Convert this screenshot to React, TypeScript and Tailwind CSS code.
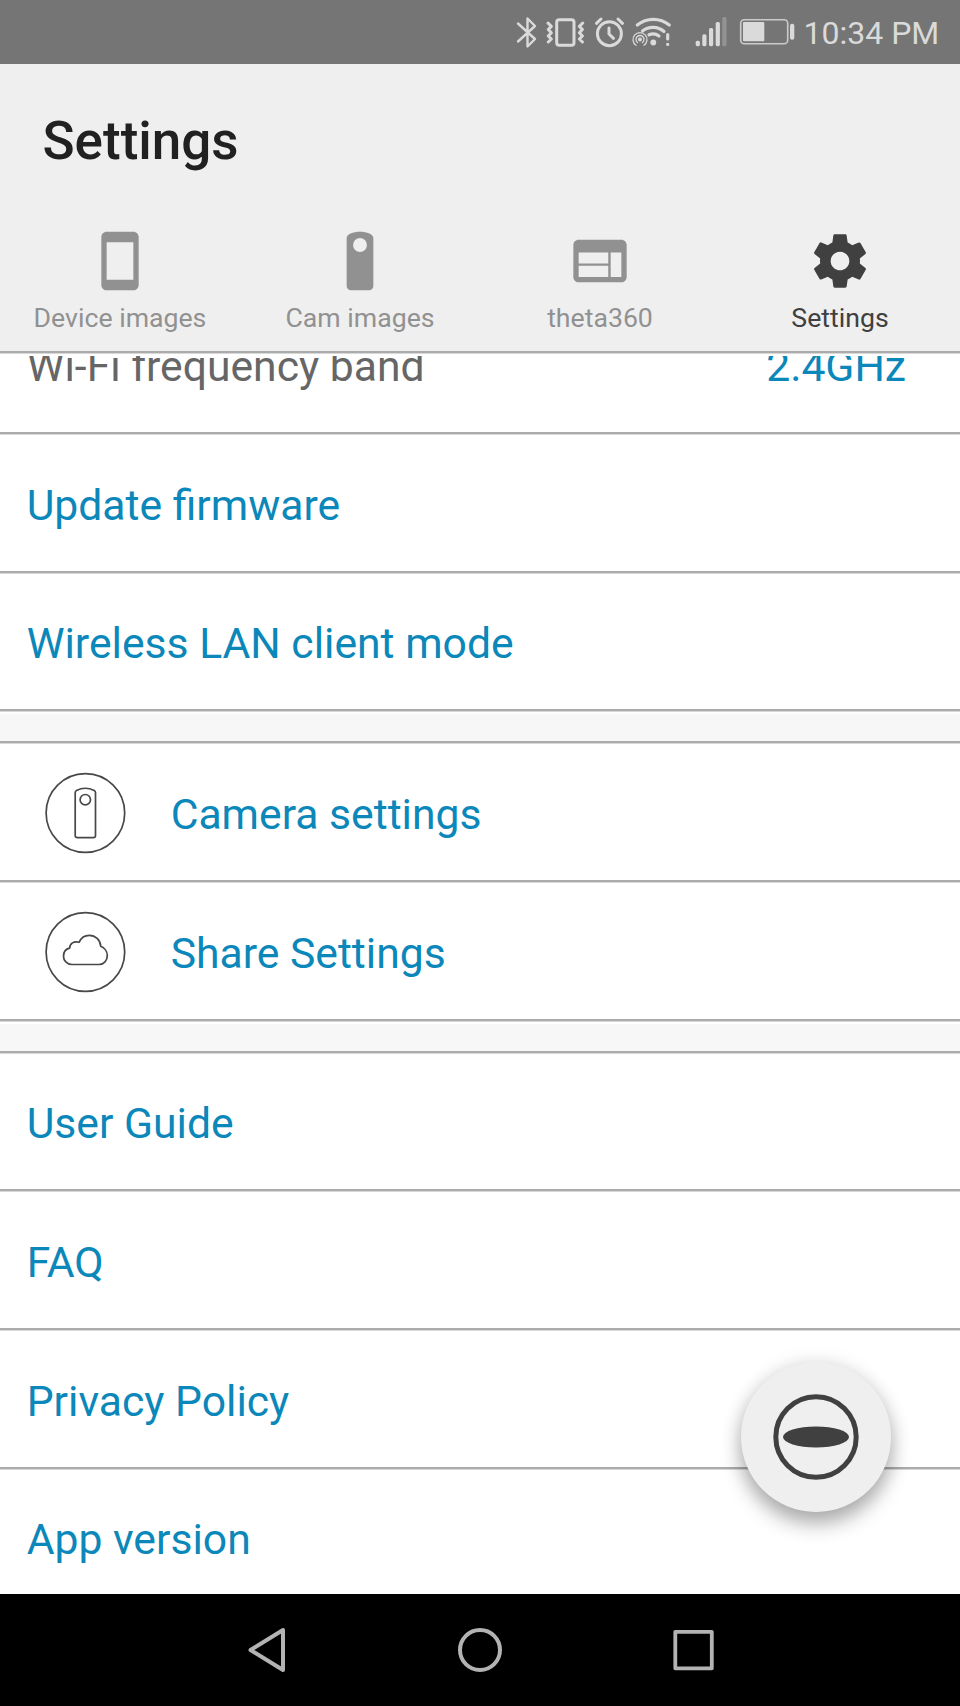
import type { ReactNode } from "react";

const GEAR =
  "M19.43 12.98c.04-.32.07-.64.07-.98s-.03-.66-.07-.98l2.11-1.65c.19-.15.24-.42.12-.64l-2-3.46c-.12-.22-.39-.3-.61-.22l-2.49 1c-.52-.4-1.08-.73-1.69-.98l-.38-2.65C14.46 2.18 14.25 2 14 2h-4c-.25 0-.46.18-.49.42l-.38 2.65c-.61.25-1.17.59-1.69.98l-2.49-1c-.23-.09-.49 0-.61.22l-2 3.46c-.13.22-.07.49.12.64l2.11 1.65c-.04.32-.07.65-.07.98s.03.66.07.98l-2.11 1.65c-.19.15-.24.42-.12.64l2 3.46c.12.22.39.3.61.22l2.49-1c.52.4 1.08.73 1.69.98l.38 2.65c.03.24.24.42.49.42h4c.25 0 .46-.18.49-.42l.38-2.65c.61-.25 1.17-.59 1.69-.98l2.49 1c.23.09.49 0 .61-.22l2-3.46c.12-.22.07-.49-.12-.64l-2.11-1.65zM12 15.5c-1.93 0-3.5-1.57-3.5-3.5s1.57-3.5 3.5-3.5 3.5 1.57 3.5 3.5-1.57 3.5-3.5 3.5z";
const PHONE =
  "M17 1.01L7 1c-1.1 0-2 .9-2 2v18c0 1.1.9 2 2 2h10c1.1 0 2-.9 2-2V3c0-1.1-.9-1.99-2-1.99zM17 19H7V5h10v14z";
const CAMERA =
  "M7 3.4C7 1.9 9.4 1 12 1s5 .9 5 2.4V21.4c0 .9-.7 1.6-1.6 1.6H8.6c-.9 0-1.6-.7-1.6-1.6zM12 3.4a2.6 2.6 0 1 0 0 5.2a2.6 2.6 0 1 0 0-5.2z";
const WEB =
  "M20 4H4c-1.1 0-1.99.9-1.99 2L2 18c0 1.1.9 2 2 2h16c1.1 0 2-.9 2-2V6c0-1.1-.9-2-2-2zm-4.9 14H4v-4.2h11.1V18zm0-5.1H4V8.8h11.1v4.1zM20 18h-4V8.8h4V18z";

function StatusBar() {
  return (
    <div className="flex h-16 shrink-0 items-center bg-[#757575] pl-[516px] text-[#dadada]">
      <svg width="21" height="36" fill="none" stroke="currentColor" strokeWidth="2.4" strokeLinejoin="round" strokeLinecap="round">
        <path d="M2 9.5L19 25L11.5 32.5V4.5L19 12L2 27.5" />
      </svg>
      <svg className="ml-[9px]" width="39" height="36" fill="none" stroke="currentColor" strokeWidth="3" strokeLinejoin="round" strokeLinecap="round">
        <rect x="10.7" y="5.7" width="17.3" height="25.6" rx="2.5" />
        <path d="M2 9L5.3 12.4L2.3 15.5L5.3 18.7L2.3 22L5.3 25L2.3 28M36.7 9L33.4 12.4L36.4 15.5L33.4 18.7L36.4 22L33.4 25L36.4 28" />
      </svg>
      <svg className="ml-[9px]" width="31" height="36" fill="none" stroke="currentColor" strokeWidth="3" strokeLinejoin="round" strokeLinecap="round">
        <circle cx="15.4" cy="19.7" r="12" />
        <path d="M2.5 9.3L7 5M24 5L28.5 9.3M15 14V20L19.5 24.3" />
      </svg>
      <svg className="ml-1.5" width="41" height="36" fill="none" stroke="currentColor" strokeWidth="3.2" strokeLinecap="round">
        <path d="M6.3 11A25.5 25.5 0 0 1 38.3 11M11.5 17A17 17 0 0 1 33 17.5M18 20.8A10 10 0 0 1 28 22" />
        <circle cx="22.3" cy="28.5" r="2.9" fill="currentColor" stroke="none" />
        <path d="M36.7 20.5V25M36.7 30.3V30.4" />
        <circle cx="9" cy="25.5" r="2" fill="currentColor" stroke="none" />
        <path strokeWidth="1.3" d="M6.5 28.6A4 4 0 1 1 11.5 28.6M5 31.3A7 7 0 1 1 13 31.3" />
      </svg>
      <svg className="ml-[23px]" width="33" height="36" fill="currentColor">
        <rect x=".7" y="26.7" width="4.2" height="5.5" rx="1.6" />
        <rect x="7.3" y="20.3" width="4.2" height="11.9" rx="1.6" />
        <rect x="14" y="14" width="4.2" height="18.2" rx="1.6" />
        <rect x="20.7" y="8" width="4.2" height="24.2" rx="1.6" />
        <rect x="27.3" y="3" width="4.2" height="29.2" rx="1.6" opacity=".3" />
      </svg>
      <svg className="ml-[11px]" width="56" height="36" fill="currentColor">
        <rect x="1.7" y="5.7" width="47" height="24" rx="3.5" fill="none" stroke="currentColor" strokeWidth="1.6" opacity=".85" />
        <rect x="4" y="8" width="21.3" height="19.2" rx="1" />
        <rect x="51" y="9.7" width="4.3" height="16" rx="2" />
      </svg>
      <span className="ml-[8.5px] pt-0.5 text-[32px] leading-none whitespace-nowrap">10:34 PM</span>
    </div>
  );
}

function Tab({ d, label, active = false }: { d: string; label: string; active?: boolean }) {
  return (
    <div className={active ? "flex flex-col items-center text-[#404040]" : "flex flex-col items-center text-[#919191]"}>
      <svg width="64" height="64" viewBox="0 0 24 24" fill="currentColor" fillRule="evenodd">
        <path d={d} />
      </svg>
      <span className="mt-[8.67px] text-[26.67px] leading-[32px] whitespace-nowrap">{label}</span>
    </div>
  );
}

function Divider() {
  return <div className="h-[3px] shrink-0 border-t-2 border-[#ababab] bg-[#d8d8d8]" />;
}

function SectionGap() {
  return <div className="h-[29px] shrink-0 border-t-2 border-white bg-[#f7f7f7]" />;
}

function Row({ label, icon, value }: { label: string; icon?: ReactNode; value?: string }) {
  return (
    <>
      <div
        className={
          icon
            ? "flex h-[135.67px] shrink-0 items-center pl-11 text-[42.67px] leading-[50px] text-[#0b87b9]"
            : "flex h-[135.67px] shrink-0 items-center pr-[54px] pl-[26.67px] text-[42.67px] leading-[50px] text-[#0b87b9]"
        }
      >
        {icon && <span className="mt-0.5 mr-[44.67px] shrink-0">{icon}</span>}
        <span className={value ? "flex-1 pt-1 text-[#666666]" : "flex-1 pt-1"}>{label}</span>
        {value && <span className="pt-1">{value}</span>}
      </div>
      <Divider />
    </>
  );
}

const cameraIcon = (
  <svg width="82" height="82" fill="none" stroke="#484848" strokeWidth="1.7">
    <circle cx="41.4" cy="41" r="39.3" />
    <path d="M31.2 20.5Q31.2 19.2 32.5 18.5Q41.3 14 50.2 18.5Q51.5 19.2 51.5 20.5V63.5Q51.5 65.7 49.3 65.7H33.4Q31.2 65.7 31.2 63.5Z" />
    <circle cx="41.3" cy="27.7" r="5.2" />
  </svg>
);

const cloudIcon = (
  <svg width="82" height="82" fill="none" stroke="#484848" strokeWidth="1.7" strokeLinejoin="round">
    <circle cx="41.4" cy="41" r="39.3" />
    <path d="M28 53.5C22.8 53.5 19.5 49.5 19.5 45.2C19.5 41 22 38 25.6 37.2C25.8 32.5 29.8 29.7 35.2 31.2C37 27 40.9 24.3 45.3 24.3C51.5 24.3 56.3 29 56.7 35.2C60.5 36.7 63.3 40.5 63.3 44.5C63.3 49.5 60 53.5 55 53.5Z" />
  </svg>
);

export default function App() {
  return (
    <div className="relative flex h-[1706px] w-[960px] flex-col overflow-hidden bg-white font-[Roboto,sans-serif]">
      <StatusBar />
      <header className="h-[287px] shrink-0 bg-[#efefef]">
        <h1 className="h-[165.33px] pt-[46px] pl-[42.5px] text-[53px] leading-[62px] font-medium text-[#212121]">Settings</h1>
        <nav className="grid grid-cols-4">
          <Tab d={PHONE} label="Device images" />
          <Tab d={CAMERA} label="Cam images" />
          <Tab d={WEB} label="theta360" />
          <Tab d={GEAR} label="Settings" active />
        </nav>
      </header>
      <Divider />
      <main className="mt-0.5 flex min-h-0 flex-1 flex-col overflow-hidden">
        <div className="-mt-[59.67px] flex flex-col">
          <Row label="Wi-Fi frequency band" value="2.4GHz" />
          <Row label="Update firmware" />
          <Row label="Wireless LAN client mode" />
          <SectionGap />
          <Divider />
          <Row label="Camera settings" icon={cameraIcon} />
          <Row label="Share Settings" icon={cloudIcon} />
          <SectionGap />
          <Divider />
          <Row label="User Guide" />
          <Row label="FAQ" />
          <Row label="Privacy Policy" />
          <Row label="App version" />
        </div>
      </main>
      <button className="absolute top-[1362px] left-[741px] flex size-[150px] items-center justify-center rounded-full bg-[#efefef] shadow-[0_12px_20px_rgba(0,0,0,0.3),0_0_20px_rgba(0,0,0,0.1)]">
        <svg width="88" height="88" fill="none">
          <circle cx="44" cy="44" r="40.2" stroke="#404040" strokeWidth="5" />
          <ellipse cx="44" cy="44" rx="33" ry="10.5" fill="#404040" />
        </svg>
      </button>
      <footer className="flex h-28 shrink-0 items-center justify-center gap-[166px] bg-black">
        <svg width="48" height="48" fill="none" stroke="#b3b3b3" strokeWidth="4" strokeLinejoin="round">
          <path d="M8.5 24L41 4V44Z" />
        </svg>
        <svg width="48" height="48" fill="none" stroke="#b3b3b3" strokeWidth="4">
          <circle cx="24" cy="24" r="20" />
        </svg>
        <svg width="48" height="48" fill="none" stroke="#b3b3b3" strokeWidth="3.8" strokeLinejoin="round">
          <rect x="5.3" y="5.8" width="36.5" height="36.5" />
        </svg>
      </footer>
    </div>
  );
}
